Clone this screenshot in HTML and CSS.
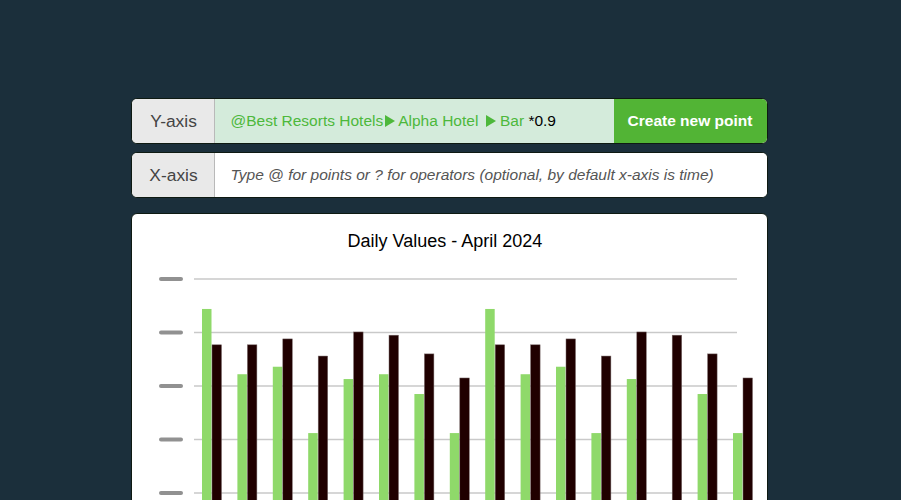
FILE: index.html
```html
<!DOCTYPE html>
<html lang="en">
<head>
<meta charset="utf-8">
<title>Daily Values</title>
<link rel="stylesheet" href="styles.css">
</head>
<body>
<div class="container">
<div class="axis-row">
<div class="axis-label">Y-axis</div>
<div class="axis-input filled"><span class="point">@Best Resorts Hotels</span><span class="arrow tight"></span><span class="point">Alpha Hotel</span> <span class="arrow"></span> <span class="point">Bar</span> *0.9</div>
<button class="create-btn">Create new point</button>
</div>

<div class="axis-row">
<div class="axis-label">X-axis</div>
<input class="axis-input" type="text" placeholder="Type @ for points or ? for operators (optional, by default x-axis is time)">
</div>

<div class="chart-card">
<svg class="chart" id="chart" width="636" height="340" xmlns="http://www.w3.org/2000/svg"></svg>
</div>
</div>

<script>
const chart = document.getElementById("chart");
const NS = "http://www.w3.org/2000/svg";

// values per day (two series)
const greenData = [44.4, 32.2, 33.6, 21.2, 31.3, 32.2, 28.5, 21.2, 44.4, 32.2, 33.6, 21.2, 31.3, 0, 28.5, 21.2];
const darkData = [37.7, 37.7, 38.8, 35.6, 40.1, 39.5, 36.0, 31.5, 37.7, 37.7, 38.8, 35.6, 40.1, 39.5, 36.0, 31.5];

const base = 332.5;
const unit = 5.35;

function y(v) {
return base - v * unit;
}

function add(tag, attrs, text) {
const el = document.createElementNS(NS, tag);
for (const k in attrs) {
el.setAttribute(k, attrs[k]);
}
if (text) el.textContent = text;
chart.appendChild(el);
return el;
}

add("text", { x: 313, y: 33, class: "chart-title", "text-anchor": "middle" }, "Daily Values - April 2024");

for (let v = 10; v <= 50; v += 10) {
add("line", { x1: 62, x2: 605, y1: y(v), y2: y(v), class: "grid" });
add("line", { x1: 29, x2: 49, y1: y(v), y2: y(v), class: "tick" });
}

greenData.forEach(function(v, i) {
const x = 70 + i * 35.4;
if (v > 0) {
add("rect", { x: x, y: y(v), width: 9.5, height: v * unit, class: "bar-green" });
}
add("rect", { x: x + 10, y: y(darkData[i]), width: 9.5, height: darkData[i] * unit, class: "bar-dark" });
});
</script>
</body>
</html>
```

FILE: styles.css
```css
* {
margin: 0;
padding: 0;
box-sizing: border-box;
}

body {
background-color: #1b2f3b;
font-family: "Liberation Sans", Arial, sans-serif;
height: 500px;
overflow: hidden;
padding-right: 3px;
}

.container {
width: 637px;
margin: 0 auto;
padding-top: 98px;
}

.axis-row {
display: flex;
height: 46px;
margin-bottom: 8px;
border: 1px solid #0e1a12;
border-radius: 6px;
overflow: hidden;
background-color: #fff;
}

.axis-label {
width: 83px;
flex-shrink: 0;
display: flex;
align-items: center;
justify-content: center;
padding-left: 2px;
background-color: #e9e9e9;
border-right: 1px solid #b9b9b9;
color: #444;
font-size: 17.4px;
}

.axis-input {
flex: 1;
padding-left: 16px;
font-family: "Liberation Sans", Arial, sans-serif;
font-size: 15.5px;
line-height: 44px;
border: none;
outline: none;
background-color: #fff;
color: #000;
white-space: nowrap;
}

.axis-input::placeholder {
color: #555;
font-style: italic;
}

.axis-input.filled {
background-color: #d4ebdb;
}

.point {
color: #4db83b;
}

.arrow {
display: inline-block;
width: 0;
height: 0;
border-left: 10px solid #4db83b;
border-top: 6.5px solid transparent;
border-bottom: 6.5px solid transparent;
margin-left: 3px;
vertical-align: -1px;
}

.arrow.tight {
margin: 0 3px 0 2px;
}

.create-btn {
width: 153px;
flex-shrink: 0;
border: none;
background-color: #52b435;
color: #fff;
font-family: "Liberation Sans", Arial, sans-serif;
font-size: 15.5px;
font-weight: bold;
cursor: pointer;
}

.chart-card {
margin-top: 15px;
background-color: #fff;
border: 1px solid #0e1a12;
border-radius: 6px;
height: 400px;
overflow: hidden;
}

.chart {
display: block;
}

.chart-title {
font-family: "Liberation Sans", Arial, sans-serif;
font-size: 18px;
fill: #000;
}

.grid {
stroke: #c9c9c9;
stroke-width: 1.5;
}

.tick {
stroke: #919191;
stroke-width: 4;
stroke-linecap: round;
}

.bar-green {
fill: #8fd96a;
}

.bar-dark {
fill: #200000;
stroke: #7a6a6a;
stroke-width: 0.5;
}
```
